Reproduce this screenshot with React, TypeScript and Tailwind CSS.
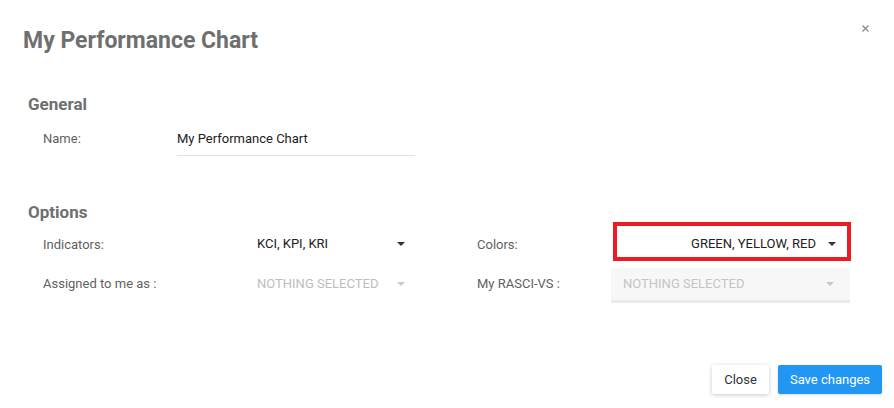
import React from "react";

function Caret({ muted }: { muted?: boolean }) {
  return (
    <span
      className={`inline-block w-0 h-0 border-x-[4px] border-x-transparent border-t-[4px] ${
        muted ? "border-t-[#c8c8c8]" : "border-t-[#333333]"
      }`}
    />
  );
}

export default function App() {
  return (
    <div className="relative w-[894px] h-[408px] bg-white font-['Roboto',sans-serif] flex flex-col">
      <button className="absolute top-[25px] right-[25px] w-[7px] h-[7px]">
        <svg width="7" height="7" viewBox="0 0 7 7" className="block">
          <path d="M0.5 0.5 L6.5 6.5 M6.5 0.5 L0.5 6.5" stroke="#8a8a8a" strokeWidth="1.3" />
        </svg>
      </button>

      <div className="px-[23px] pt-[26px]">
        <h1 className="text-[23px] leading-[30px] font-bold text-[#6f6f6f]">My Performance Chart</h1>
      </div>

      <div className="pl-[28px] mt-[38px]">
        <h2 className="text-[17px] leading-[20px] font-bold text-[#6f6f6f]">General</h2>
        <div className="flex items-center mt-[8px] pl-[15px]">
          <span className="w-[134px] text-[13px] text-[#5f5f5f]">Name:</span>
          <div className="w-[238px] h-[34px] flex items-center border-b border-[#e0e0e0] text-[13px] text-[#212121]">
            My Performance Chart
          </div>
        </div>

        <h2 className="mt-[46px] text-[17px] leading-[20px] font-bold text-[#6f6f6f]">Options</h2>

        <div className="flex items-start h-[40px] pl-[15px] text-[13px] leading-[16px]">
          <span className="w-[214px] mt-[15px] text-[#5f5f5f]">Indicators:</span>
          <div className="w-[148px] mt-[14px] flex items-center justify-between text-[#212121]">
            <span>KCI, KPI, KRI</span>
            <Caret />
          </div>
          <span className="ml-[72px] w-[136px] mt-[15px] text-[#5f5f5f]">Colors:</span>
          <div className="w-[238px] h-[39px] border-4 border-[#ed1c24] flex items-center justify-end pr-[11px] pt-[4px] text-[#212121]">
            <span>GREEN, YELLOW, RED</span>
            <span className="ml-[12px] flex items-center">
              <Caret />
            </span>
          </div>
        </div>

        <div className="flex items-start h-[35px] mt-[6px] pl-[15px] text-[13px] leading-[16px]">
          <span className="w-[214px] mt-[8px] text-[#5f5f5f]">Assigned to me as :</span>
          <div className="w-[148px] mt-[8px] flex items-center justify-between text-[#bdbdbd]">
            <span>NOTHING SELECTED</span>
            <Caret muted />
          </div>
          <span className="ml-[72px] w-[134px] mt-[8px] text-[#5f5f5f]">My RASCI-VS :</span>
          <div className="w-[239px] h-[35px] bg-[#f7f7f7] border-b-[3px] border-[#ebebeb] flex items-center justify-between pl-[12px] pr-[16px] text-[#c4c4c4]">
            <span>NOTHING SELECTED</span>
            <Caret muted />
          </div>
        </div>
      </div>

      <div className="mt-auto flex justify-end gap-[9px] pr-[12px] pb-[14px]">
        <button className="w-[57px] h-[29px] rounded-[2px] bg-white text-[13px] text-[#333333] shadow-[0_1px_4px_rgba(0,0,0,0.22)]">
          Close
        </button>
        <button className="w-[104px] h-[29px] rounded-[2px] bg-[#2196f3] text-[13px] text-white shadow-[0_1px_3px_rgba(0,0,0,0.15)]">
          Save changes
        </button>
      </div>
    </div>
  );
}
